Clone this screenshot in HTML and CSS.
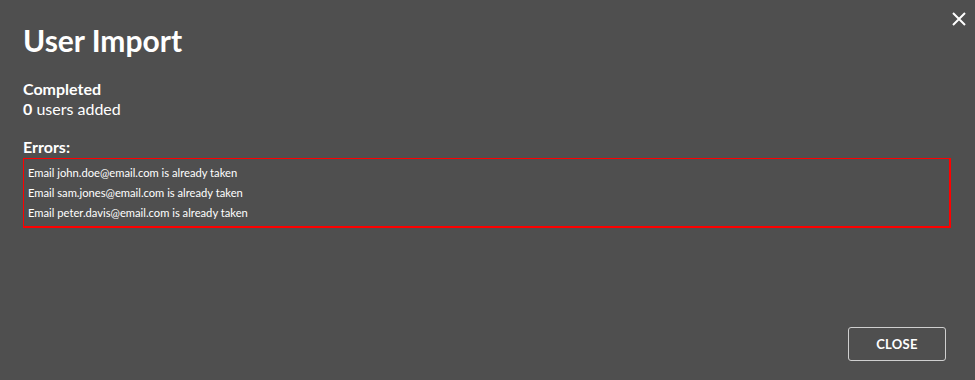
FILE: index.html
```html
<!DOCTYPE html>
<html>
<head>
<meta charset="utf-8">
<link rel="stylesheet" href="styles.css">
</head>
<body>
<div class="dialog">
  <button class="dismiss" aria-label="Close">
    <svg width="14" height="14" viewBox="0 0 14 14"><path d="M1 1L13 13M13 1L1 13" stroke="#ffffff" stroke-width="2" fill="none"/></svg>
  </button>
  <h1 class="title">User Import</h1>
  <div class="summary">
    <div class="status">Completed</div>
    <div class="count"><b>0</b> users added</div>
  </div>
  <div class="errors-label">Errors:</div>
  <div class="errors">
    <div class="err">Email john.doe@email.com is already taken</div>
    <div class="err">Email sam.jones@email.com is already taken</div>
    <div class="err">Email peter.davis@email.com is already taken</div>
  </div>
  <div class="footer">
    <button class="close-btn">CLOSE</button>
  </div>
</div>
</body>
</html>
```
FILE: styles.css
```css
html, body {
  margin: 0;
  padding: 0;
  height: 100%;
}
body {
  background: #4f4f4f;
  color: #ffffff;
  font-family: Lato, "Open Sans", sans-serif;
}
.dialog {
  position: relative;
  box-sizing: border-box;
  height: 380px;
  padding: 23px 24px 19px 23px;
  display: flex;
  flex-direction: column;
}
.dismiss {
  position: absolute;
  top: 12px;
  right: 9px;
  padding: 0;
  border: 0;
  background: none;
  width: 14px;
  height: 14px;
  display: block;
}
.dismiss svg { display: block; }
.title {
  margin: 0;
  font-size: 30px;
  font-weight: 700;
  line-height: 34px;
}
.summary {
  margin-top: 22px;
  font-size: 16px;
  line-height: 20px;
}
.status { font-weight: 700; }
.count b { font-weight: 700; }
.errors-label {
  margin-top: 18px;
  font-size: 16px;
  font-weight: 700;
  line-height: 20px;
}
.errors {
  margin-top: 1px;
  border: 1px solid #ff0000;
  border-right-width: 2px;
  border-bottom-width: 2px;
  padding: 4px 4px 3px 4px;
  font-size: 11.2px;
  line-height: 20px;
}
.footer {
  margin-top: auto;
  display: flex;
  justify-content: flex-end;
  padding-right: 5px;
}
.close-btn {
  width: 98px;
  height: 34px;
  border: 1px solid #cfcfcf;
  border-radius: 3px;
  background: transparent;
  color: #ffffff;
  font-family: Lato, "Open Sans", sans-serif;
  font-weight: 700;
  font-size: 13px;
  letter-spacing: 0.3px;
  padding: 0;
}
```
